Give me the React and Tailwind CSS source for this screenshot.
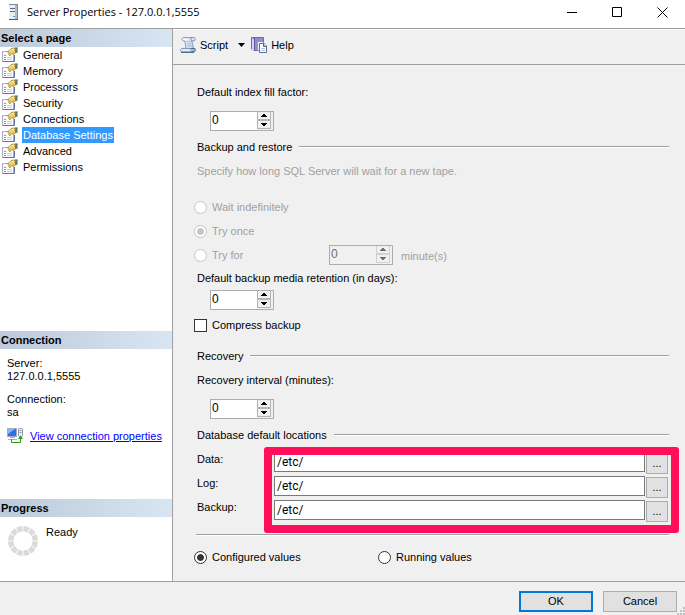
import { useState } from 'react';

const pages = [
  'General',
  'Memory',
  'Processors',
  'Security',
  'Connections',
  'Database Settings',
  'Advanced',
  'Permissions',
];

const locations = [
  { id: 'data', label: 'Data:' },
  { id: 'log', label: 'Log:' },
  { id: 'backup', label: 'Backup:' },
];

function ServerIcon() {
  return (
    <svg width="11" height="16" viewBox="0 0 11 16" shapeRendering="crispEdges">
      <rect x="1" y="0" width="9" height="16" fill="#7d8a9f" />
      <rect x="1" y="1" width="6" height="14" fill="#e9eef6" />
      <rect x="7" y="1" width="2" height="14" fill="#aebbd0" />
      <rect x="2" y="4" width="5" height="1" fill="#5a6b85" />
      <rect x="2" y="7" width="5" height="1" fill="#5a6b85" />
      <rect x="5" y="12" width="2" height="1" fill="#4f9bd8" />
      <rect x="1" y="15" width="9" height="1" fill="#4b5668" />
    </svg>
  );
}

function PageIcon() {
  return (
    <svg width="16" height="16" viewBox="0 0 16 16">
      <path d="M.5 4.500h11v10H.5z" fill="#fafbfe" stroke="#a3aec2" />
      <path d="M12.500 8v6.500H1" fill="none" stroke="#66758f" />
      <path d="M2 8.500h2M2 10.500h2M2 12.500h2" stroke="#8593d6" />
      <path d="M5 10.500h5M5 12.500h5" stroke="#c3cae4" />
      <path d="M5.500 5L9 1.500 12 1l1.500 1.500V6l-2 1.200L10 6.500 8 8.800 6.500 7.500 7.500 6z" fill="#f0ca55" stroke="#8a7434" strokeWidth="0.700" />
      <path d="M7 4.800L9.500 2.500 12 2" fill="none" stroke="#fff3b8" />
      <path d="M13 1.500L15.500.5V6L13 5.500z" fill="#5f7d55" />
      <path d="M12.500 1h3" stroke="#75694a" />
    </svg>
  );
}

function ScriptIcon() {
  return (
    <svg width="16" height="16" viewBox="0 0 16 16">
      <defs>
        <linearGradient id="paper" x1="0" y1="0" x2="1" y2="1">
          <stop offset="0" stopColor="#ffffff" />
          <stop offset="1" stopColor="#b5c9ea" />
        </linearGradient>
      </defs>
      <path d="M3 .600h11.500c1.300.5 1.300 3-.3 3.200H12c-.3 2 1.800 5 1 8H5.500C6.500 9 4.500 6 5 4 1.500 4.500 1.500 1 3 .600z" fill="url(#paper)" stroke="#8295b5" />
      <path d="M12 4c-1.500-.3-1.500-2-.5-3.200" fill="none" stroke="#6c82a6" />
      <path d="M6.500 4.500h4M7 6.500h4M7.500 8.500h4" stroke="#a9bcdc" />
      <path d="M1.500 11.500H11c-.8 1 0 2.500 1 3.500H1.500c-1.300-.5-1.300-3 0-3.500z" fill="#e3ecfa" stroke="#8295b5" />
      <path d="M11 11.500h4c.8 1.500.3 3-1 3.500h-2" fill="#9db3d6" stroke="#50678e" />
      <path d="M1 15.300h13" stroke="#3d5274" />
    </svg>
  );
}

function HelpIcon() {
  return (
    <svg width="16" height="16" viewBox="0 0 16 16">
      <path d="M.5.500h12v13H3L.5 12z" fill="#8f8dcf" stroke="#6b6ab0" />
      <path d="M1 1l2 1.500V14L1 12.800z" fill="#d3d3f1" />
      <path d="M3.500 1v12" stroke="#5f5caa" />
      <path d="M6.500 4.500h5l2 2v7h-7z" fill="#eef2fb" stroke="#8b9bba" />
      <path d="M8.500 6.500h4.500l2.500 2.500v6.500h-7z" fill="#fff" stroke="#5b7096" />
      <path d="M12.500 6.500V9.500h3" fill="#cbd8ee" stroke="#4c6187" />
      <path d="M10 11.500h4M10 13.500h4" stroke="#b9c6df" />
    </svg>
  );
}

function ConnectionIcon() {
  return (
    <svg width="16" height="16" viewBox="0 0 16 16">
      <rect x="0.500" y="0.500" width="9" height="8" fill="#d5deee" stroke="#a0acc2" />
      <rect x="1" y="1" width="8" height="7" fill="#2c6fe0" />
      <path d="M1 1h7L1 6z" fill="#86b8f8" />
      <path d="M3 9.500h5M1 11.500h9" stroke="#a3afc4" />
      <rect x="11.500" y="0.500" width="4" height="8" rx="1" fill="#eef1f6" stroke="#8d97a6" />
      <path d="M12.500 2.500h2M12.500 4.500h2" stroke="#8d97a6" />
      <path d="M4.500 11v3.500h9V10" fill="none" stroke="#2c9b17" />
      <path d="M11 11l2.500-3.500L16 11z" fill="#2c9b17" />
    </svg>
  );
}

function ProgressRing() {
  return (
    <svg width="30" height="30" viewBox="0 0 30 30" className="shrink-0">
      <circle
        cx="15"
        cy="15"
        r="12.300"
        fill="none"
        stroke="#dadada"
        strokeWidth="5.400"
        pathLength="120"
        strokeDasharray="8.500 1.500"
        strokeDashoffset="-0.750"
      />
    </svg>
  );
}

function SidebarHeading({ children }) {
  return (
    <h2 className="h-[18px] bg-gradient-to-r from-[#bccad9] to-[#d8e5f3] pl-px text-[11px] leading-[18px] font-bold">
      {children}
    </h2>
  );
}

function SectionHeading({ children }) {
  return (
    <div className="flex h-6 items-center gap-[7px] pl-[3px]">
      <h3>{children}</h3>
      <div className="h-[2px] flex-1 border-t border-[#a0a0a0] bg-white" />
    </div>
  );
}

function Spinner({ id, label, disabled = false }) {
  const [value, setValue] = useState(0);

  return (
    <div
      className={`flex h-5 w-16 border border-[#abadb3] ${
        disabled ? 'bg-[#f0f0f0] text-[#6d6d6d]' : 'bg-white text-black'
      }`}
    >
      <input
        id={id}
        type="text"
        inputMode="numeric"
        aria-label={label}
        disabled={disabled}
        value={value}
        onChange={(e) => setValue(Number(e.target.value) || 0)}
        className="h-4 w-full min-w-0 pl-px text-[12px] leading-4 outline-none"
      />
      <div className="flex w-4 shrink-0 flex-col bg-[#f0f0f0] pr-[2px] pb-px">
        <button
          type="button"
          aria-label="Increase"
          disabled={disabled}
          onClick={() => setValue(value + 1)}
          className="flex flex-1 items-center justify-center border border-t-0 border-[#b4b4b4] disabled:border-[#d0d0d0]"
        >
          <svg width="6" height="3" viewBox="0 0 6 3" fill="currentColor" shapeRendering="crispEdges">
            <path d="M2 0h2v1h1v1h1v1H0V2h1V1h1z" />
          </svg>
        </button>
        <button
          type="button"
          aria-label="Decrease"
          disabled={disabled}
          onClick={() => setValue(Math.max(0, value - 1))}
          className="flex flex-1 items-center justify-center border border-[#b4b4b4] disabled:border-[#d0d0d0]"
        >
          <svg width="6" height="3" viewBox="0 0 6 3" fill="currentColor" shapeRendering="crispEdges">
            <path d="M0 0h6v1H5v1H4v1H2V2H1V1H0z" />
          </svg>
        </button>
      </div>
    </div>
  );
}

function Radio({ name, label, checked, onChange, disabled = false }) {
  return (
    <label className={`flex h-6 items-center gap-[5px] pb-px ${disabled ? 'text-[#a0a0a0]' : ''}`}>
      <input
        type="radio"
        name={name}
        checked={checked}
        disabled={disabled}
        onChange={onChange}
        className="h-[13px] w-[13px] appearance-none rounded-full border border-[#333] bg-white p-[2px] checked:bg-[#333] checked:bg-clip-content checked:shadow-[inset_0_0_0_2px_#fff] disabled:border-[#c4c4c4] disabled:checked:bg-[#c4c4c4]"
      />
      {label}
    </label>
  );
}

export default function App() {
  const [page, setPage] = useState('Database Settings');
  const [view, setView] = useState('configured');
  const [paths, setPaths] = useState({ data: '/etc/', log: '/etc/', backup: '/etc/' });

  return (
    <div className="flex min-h-screen flex-col bg-[#f0f0f0] font-['Liberation_Sans',Arial,sans-serif] text-[11px] leading-[13px] text-black">
      <header className="flex h-[29px] items-start border-b border-[#a0a0a0] bg-white pl-2">
        <div className="flex h-6 items-center gap-2">
          <ServerIcon />
          <h1 className="font-['Open_Sans','Noto_Sans',sans-serif] text-[11px] leading-4">
            Server Properties - 127.0.0.1,5555
          </h1>
        </div>
        <div className="ml-auto flex h-6">
          <button type="button" aria-label="Minimize" className="flex w-[45px] items-center justify-center">
            <svg width="11" height="11" viewBox="0 0 11 11" stroke="#000"><path d="M0 5.500h10" /></svg>
          </button>
          <button type="button" aria-label="Maximize" className="flex w-[45px] items-center justify-center">
            <svg width="11" height="11" viewBox="0 0 11 11" fill="none" stroke="#000"><path d="M.5.500h9v9h-9z" /></svg>
          </button>
          <button type="button" aria-label="Close" className="flex w-[45px] items-center justify-center">
            <svg width="11" height="11" viewBox="0 0 11 11" stroke="#000"><path d="M.5.500l10 10M10.500.500l-10 10" /></svg>
          </button>
        </div>
      </header>

      <div className="flex flex-1">
        <aside className="flex w-[173px] shrink-0 flex-col border-r border-[#a0a0a0] bg-white">
          <nav className="flex-1">
            <SidebarHeading>Select a page</SidebarHeading>
            <ul>
              {pages.map((item) => (
                <li key={item}>
                  <button
                    type="button"
                    onClick={() => setPage(item)}
                    className="flex h-4 items-center gap-1 pl-[2px]"
                  >
                    <PageIcon />
                    <span className={`px-px leading-4 ${page === item ? 'bg-[#3399ff] text-white' : ''}`}>
                      {item}
                    </span>
                  </button>
                </li>
              ))}
            </ul>
          </nav>

          <section className="h-[168px]">
            <SidebarHeading>Connection</SidebarHeading>
            <dl className="px-[7px] pt-2">
              <dt>Server:</dt>
              <dd>127.0.0.1,5555</dd>
              <dt className="mt-[10px]">Connection:</dt>
              <dd>sa</dd>
            </dl>
            <div className="mt-[9px] flex items-center gap-[7px] pl-[7px]">
              <ConnectionIcon />
              <a href="#connection" className="text-[#0000ff] underline">View connection properties</a>
            </div>
          </section>

          <section className="h-[82px]">
            <SidebarHeading>Progress</SidebarHeading>
            <div className="flex items-start gap-2 pt-[9px] pl-2">
              <ProgressRing />
              <p>Ready</p>
            </div>
          </section>
        </aside>

        <main className="min-w-0 flex-1 border-t border-white">
          <div className="flex h-[35px] items-center border-b border-[#a0a0a0] pb-1 pl-[7px]">
            <button type="button" className="flex items-center gap-1">
              <ScriptIcon />
              Script
            </button>
            <button type="button" aria-label="Script options" className="ml-[5px] flex w-4 justify-center">
              <svg width="7" height="4" viewBox="0 0 7 4"><path d="M0 0h7L3.500 4z" /></svg>
            </button>
            <button type="button" className="ml-[2px] flex items-center gap-1">
              <HelpIcon />
              Help
            </button>
          </div>

          <form className="pt-[15px] pr-4 pb-2 pl-[21px]" onSubmit={(e) => e.preventDefault()}>
            <label htmlFor="fill" className="flex h-6 items-center pl-[3px]">Default index fill factor:</label>
            <div className="mt-[7px] pl-4"><Spinner id="fill" /></div>

            <div className="mt-1">
              <SectionHeading>Backup and restore</SectionHeading>
            </div>
            <p className="flex h-6 items-center pl-[3px] text-[#a0a0a0]">
              Specify how long SQL Server will wait for a new tape.
            </p>
            <div className="mt-[13px]">
              <Radio name="tape" label="Wait indefinitely" disabled />
              <Radio name="tape" label="Try once" checked disabled />
              <div className="flex items-center">
                <div className="w-[135px]"><Radio name="tape" label="Try for" disabled /></div>
                <div className="mb-[2px]"><Spinner id="minutes" label="Minutes" disabled /></div>
                <span className="pl-2 text-[#a0a0a0]">minute(s)</span>
              </div>
            </div>

            <label htmlFor="retention" className="flex h-5 items-center pl-[3px]">
              Default backup media retention (in days):
            </label>
            <div className="mt-[2px] pl-4"><Spinner id="retention" /></div>
            <label className="flex h-8 items-center gap-[5px] pb-px">
              <input type="checkbox" className="h-[13px] w-[13px] appearance-none border border-[#333] bg-white checked:bg-[#333]" />
              Compress backup
            </label>

            <div className="mt-[2px]">
              <SectionHeading>Recovery</SectionHeading>
            </div>
            <label htmlFor="recovery" className="flex h-6 items-center pl-[3px]">Recovery interval (minutes):</label>
            <div className="mt-[7px] pl-4"><Spinner id="recovery" /></div>

            <div className="mt-1">
              <SectionHeading>Database default locations</SectionHeading>
            </div>
            <div className="relative pb-[14px]">
              {locations.map(({ id, label }) => (
                <div key={id} className="flex h-6 items-start pr-px pl-[3px]">
                  <label htmlFor={id} className="w-[77px] shrink-0 leading-6">{label}</label>
                  <input
                    id={id}
                    type="text"
                    value={paths[id]}
                    onChange={(e) => setPaths({ ...paths, [id]: e.target.value })}
                    className="mt-[5px] h-5 min-w-0 flex-1 border border-[#7a7a7a] bg-white px-[2px] font-[Roboto,sans-serif] text-[12px] outline-none"
                  />
                  <button
                    type="button"
                    aria-label={`Browse ${id} folder`}
                    className="mt-[6px] ml-px h-[21px] w-[22px] border border-[#adadad] bg-[#e1e1e1]"
                  >
                    ...
                  </button>
                </div>
              ))}
              {/* callout frame around the three paths */}
              <div className="pointer-events-none absolute inset-y-0 -right-[10px] left-[70px] rounded-[3px] border-8 border-[#ff0f5b]" />
            </div>

            <div className="mt-px ml-[2px] h-[2px] border-t border-[#a0a0a0] bg-white" />
            <div className="mt-[10px] flex">
              <div className="w-[184px]">
                <Radio name="view" label="Configured values" checked={view === 'configured'} onChange={() => setView('configured')} />
              </div>
              <Radio name="view" label="Running values" checked={view === 'running'} onChange={() => setView('running')} />
            </div>
          </form>
        </main>
      </div>

      <footer className="relative flex justify-end gap-[10px] border-t border-[#a0a0a0] pt-[9px] pr-2 pb-[3px]">
        <button type="button" className="h-[21px] w-[74px] border-2 border-[#0078d7] bg-[#e1e1e1]">OK</button>
        <button type="button" className="h-[21px] w-[74px] border border-[#adadad] bg-[#e1e1e1]">Cancel</button>
        <svg width="8" height="8" viewBox="0 0 8 8" fill="#bfbfbf" className="absolute right-0 bottom-0">
          <path d="M6 0h2v2H6zM3 3h2v2H3zM6 3h2v2H6zM0 6h2v2H0zM3 6h2v2H3zM6 6h2v2H6z" />
        </svg>
      </footer>
    </div>
  );
}
